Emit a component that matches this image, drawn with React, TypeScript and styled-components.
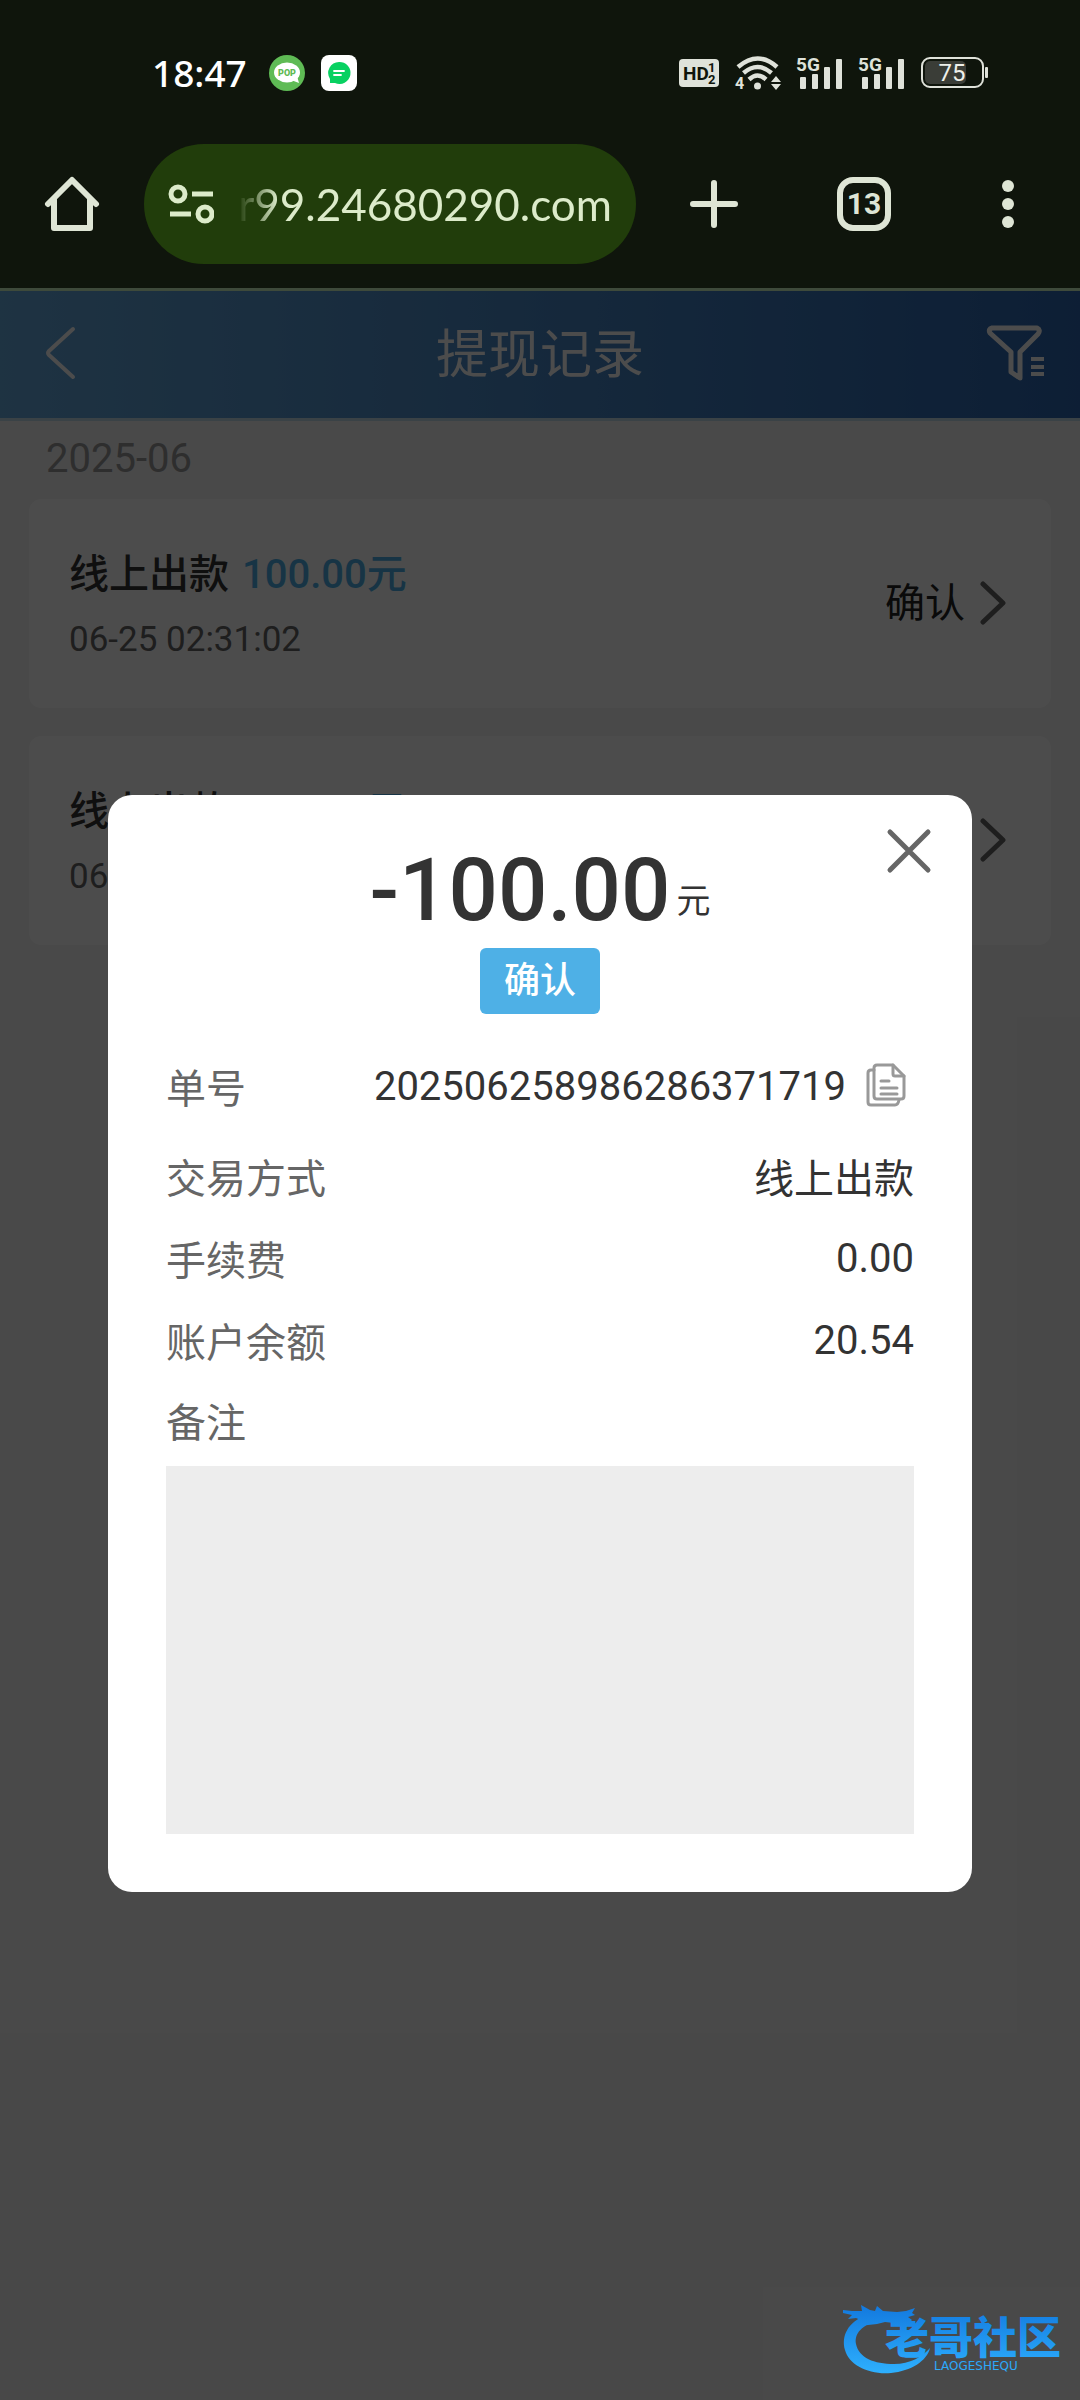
import React, { useState } from 'react';
import styled, { createGlobalStyle } from 'styled-components';

const GlobalStyle = createGlobalStyle`
  *, *::before, *::after { box-sizing: border-box; }
  body {
    margin: 0;
    background: #0f150c;
    font-family: Roboto, "Noto Sans CJK SC", sans-serif;
  }
  button { font: inherit; color: inherit; }
`;

const Screen = styled.div`
  display: flex;
  flex-direction: column;
  min-height: 100vh;
  overflow: hidden;
`;

/* ---------- phone status bar ---------- */

const StatusBar = styled.div`
  display: flex;
  align-items: center;
  justify-content: space-between;
  height: 144px;
  padding: 2px 92px 0 152px;
`;

const StatusGroup = styled.div`
  display: flex;
  align-items: center;
  gap: 16px;
`;

const Clock = styled.time`
  margin-right: 6px;
  color: #fff;
  font: 500 37px/40px "Noto Sans", sans-serif;
`;

/* ---------- browser toolbar ---------- */

const Toolbar = styled.header`
  display: flex;
  align-items: center;
  padding-bottom: 24px;
  border-bottom: 3px solid #3e4a3b;
  color: #dee5d5;
`;

const ToolButton = styled.button<{ $width?: number }>`
  display: flex;
  align-items: center;
  justify-content: center;
  flex: none;
  width: ${(p) => p.$width ?? 144}px;
  height: 120px;
  padding: 0;
  border: 0;
  background: none;
`;

const AddressPill = styled.div`
  display: flex;
  flex: 1;
  align-items: center;
  gap: 24px;
  min-width: 0;
  height: 120px;
  padding: 0 24px;
  border-radius: 60px;
  background: #213d0b;
  color: #dcebca;
`;

const SiteButton = styled.button`
  display: flex;
  flex: none;
  padding: 0;
  border: 0;
  background: none;
`;

const AddressInput = styled.input`
  flex: 1;
  min-width: 0;
  padding: 0;
  border: 0;
  outline: 0;
  background: none;
  color: inherit;
  font: 400 44px/56px Lato, sans-serif;
  text-align: right;
  mask-image: linear-gradient(to right, transparent 0, #000 40px);
`;

const TabCount = styled.span`
  display: flex;
  align-items: center;
  justify-content: center;
  width: 54px;
  height: 54px;
  border: 6px solid currentColor;
  border-radius: 16px;
  font-size: 30px;
  font-weight: 700;
  line-height: 40px;
`;

/* ---------- page ---------- */

const Page = styled.main`
  position: relative;
  flex: 1;
  background: #f3f3f3;
`;

const TitleBar = styled.div`
  display: grid;
  grid-template-columns: 160px 1fr 160px;
  align-items: center;
  height: 130px;
  border-bottom: 3px solid #c2dcec;
  background: linear-gradient(90deg, #66aade, #2c67b2);
  background-clip: padding-box;
  color: #fff;
`;

const Title = styled.h1`
  margin: 0;
  padding-top: 2px;
  font-size: 52px;
  font-weight: 400;
  line-height: 72px;
  text-align: center;
`;

const BarButton = styled.button<{ $end?: boolean }>`
  display: flex;
  justify-content: ${(p) => (p.$end ? 'flex-end' : 'flex-start')};
  padding: ${(p) => (p.$end ? '0 34px 4px 0' : '0 0 4px 44px')};
  border: 0;
  background: none;
`;

const Month = styled.h2`
  margin: 0 0 2px;
  padding: 0 46px;
  color: #999;
  font-size: 40px;
  font-weight: 400;
  line-height: 76px;
`;

const RecordList = styled.ul`
  display: flex;
  flex-direction: column;
  gap: 28px;
  margin: 0;
  padding: 0 29px;
  list-style: none;
`;

const RecordCard = styled.button`
  display: flex;
  align-items: center;
  justify-content: space-between;
  width: 100%;
  height: 209px;
  padding: 0 44px 0 40px;
  border: 0;
  border-radius: 12px;
  background: #fff;
  text-align: left;
`;

const RecordInfo = styled.span`
  display: flex;
  flex-direction: column;
  gap: 10px;
  padding-top: 4px;
`;

const RecordTitle = styled.span`
  display: flex;
  gap: 13px;
  color: #333;
  font-size: 40px;
  font-weight: 500;
  line-height: 58px;
`;

const RecordAmount = styled.span`
  color: #4eb0e6;
`;

const RecordTime = styled.span`
  color: #666;
  font-size: 35px;
  line-height: 52px;
`;

const RecordState = styled.span`
  display: flex;
  align-items: center;
  gap: 14px;
  color: #222;
  font-size: 40px;
  line-height: 58px;
`;

/* ---------- detail dialog ---------- */

const Scrim = styled.div`
  position: absolute;
  inset: 0;
  display: flex;
  align-items: center;
  justify-content: center;
  padding-bottom: 4px;
  background: rgba(0, 0, 0, 0.7);
`;

const Dialog = styled.section`
  position: relative;
  display: flex;
  flex-direction: column;
  width: 80%;
  padding: 45px 58px 58px;
  border-radius: 24px;
  background: #fff;
  color: #333;
`;

const CloseButton = styled.button`
  position: absolute;
  top: 33px;
  right: 40px;
  display: flex;
  padding: 0;
  border: 0;
  background: none;
`;

const Amount = styled.p`
  display: flex;
  align-items: flex-end;
  justify-content: center;
  gap: 6px;
  margin: 0;
  font-size: 87px;
  font-weight: 500;
  line-height: 100px;
`;

const Unit = styled.span`
  font-size: 34px;
  font-weight: 400;
  line-height: 78px;
`;

const StateTag = styled.span`
  align-self: center;
  margin: 8px 0 23px;
  padding: 0 24px;
  border-radius: 6px;
  background: #4eb0e6;
  color: #fff;
  font-size: 36px;
  font-weight: 500;
  line-height: 66px;
`;

const Details = styled.dl`
  margin: 0;
  font-size: 40px;
`;

const DetailRow = styled.div<{ $tall?: boolean }>`
  display: flex;
  align-items: center;
  justify-content: space-between;
  height: ${(p) => (p.$tall ? 98 : 82)}px;
`;

const DetailLabel = styled.dt`
  color: #666;
`;

const DetailValue = styled.dd`
  display: flex;
  align-items: center;
  gap: 20px;
  margin: 0;
`;

const CopyButton = styled.button`
  display: flex;
  padding: 0 8px 0 0;
  border: 0;
  background: none;
`;

const NoteLabel = styled.label`
  color: #666;
  font-size: 40px;
  line-height: 85px;
`;

const Note = styled.textarea`
  display: block;
  width: 100%;
  height: 368px;
  padding: 20px;
  border: 0;
  outline: 0;
  resize: none;
  background: #ededed;
  color: #333;
  font: inherit;
  font-size: 36px;
`;

const Watermark = styled.div`
  position: absolute;
  right: 16px;
  bottom: 24px;
  display: flex;
`;

/* ---------- drawings ---------- */

const PopIcon = () => (
  <svg width="36" height="36" viewBox="0 0 36 36">
    <circle cx="18" cy="18" r="18" fill="#5fbb55" />
    <ellipse cx="18" cy="17.500" rx="13" ry="10" fill="#fff" />
    <path d="M22 25l8 3-2-7z" fill="#fff" />
    <text x="18" y="21" textAnchor="middle" fontFamily="Roboto" fontWeight="900" fontSize="9" fill="#5fbb55">POP</text>
  </svg>
);

const ChatIcon = () => (
  <svg width="36" height="36" viewBox="0 0 36 36">
    <rect width="36" height="36" rx="8" fill="#fff" />
    <path d="M18 7a11 11 0 1 1-4 21l-5 0 0-4A11 11 0 0 1 18 7z" fill="#08d161" />
    <path d="M13 16h10M13 20h7" stroke="#fff" strokeWidth="1.800" strokeLinecap="round" />
  </svg>
);

const HdIcon = () => (
  <svg width="40" height="28" viewBox="0 0 40 28">
    <rect width="40" height="28" rx="4" fill="#dfe2da" />
    <g fill="#0f150c" fontFamily="Roboto" fontWeight="700">
      <text x="4" y="21" fontSize="19">HD</text>
      <text x="29" y="13" fontSize="13">1</text>
      <text x="29" y="25" fontSize="13">2</text>
    </g>
  </svg>
);

const WifiIcon = () => (
  <svg width="46" height="36" viewBox="0 0 46 36" overflow="visible">
    <g fill="none" stroke="#dfe2da" strokeWidth="4.500">
      <path d="M3 12q20-17 39 0" />
      <path d="M8.500 18q14-12 28 0" />
      <path d="M14 24.500q8.500-8 17 0" />
    </g>
    <g fill="#dfe2da">
      <circle cx="22.500" cy="31" r="3.500" />
      <path d="M36 27l5-6 5 6zM36 29l5 6 5-6z" />
      <text x="0" y="34" fontFamily="Roboto" fontWeight="700" fontSize="16">4</text>
    </g>
  </svg>
);

const SignalIcon = () => (
  <svg width="46" height="34" viewBox="0 0 46 34" overflow="visible">
    <g fill="#dfe2da">
      <rect x="3" y="21" width="6" height="12" rx="1" />
      <rect x="15" y="18" width="6" height="15" rx="1" />
      <rect x="27" y="11" width="6" height="22" rx="1" />
      <rect x="39" y="3" width="6" height="30" rx="1" />
      <text x="-1" y="15" fontFamily="Roboto" fontWeight="700" fontSize="19">5G</text>
    </g>
  </svg>
);

const BatteryIcon = () => (
  <svg width="67" height="32" viewBox="0 0 67 32">
    <rect x="1" y="1" width="61" height="29" rx="8" fill="none" stroke="#dfe2da" strokeWidth="2" />
    <rect x="4" y="4" width="41" height="23" rx="5" fill="#3a3d37" />
    <rect x="64" y="10" width="3" height="11" rx="1" fill="#dfe2da" />
    <text x="31" y="24" textAnchor="middle" fontFamily="Roboto" fontSize="24" fill="#eef0ea">75</text>
  </svg>
);

const HomeIcon = () => (
  <svg width="56" height="56" viewBox="0 0 56 56" fill="none" stroke="currentColor" strokeWidth="6" strokeLinecap="round" strokeLinejoin="round">
    <path d="M4 28L28 4l24 24" />
    <path d="M10 24v28h36V24" />
  </svg>
);

const TuneIcon = () => (
  <svg width="46" height="40" viewBox="0 0 46 40" fill="none" stroke="currentColor" strokeWidth="5">
    <circle cx="10" cy="10" r="7" />
    <path d="M24 10h21M2 30h21" />
    <circle cx="37" cy="30" r="7" />
  </svg>
);

const PlusIcon = () => (
  <svg width="48" height="48" viewBox="0 0 48 48" stroke="currentColor" strokeWidth="6" strokeLinecap="round">
    <path d="M24 3v42M3 24h42" />
  </svg>
);

const MoreIcon = () => (
  <svg width="12" height="48" viewBox="0 0 12 48" fill="currentColor">
    <circle cx="6" cy="6" r="6" />
    <circle cx="6" cy="24" r="6" />
    <circle cx="6" cy="42" r="6" />
  </svg>
);

const BackIcon = () => (
  <svg width="32" height="54" viewBox="0 0 32 54" fill="none" stroke="currentColor" strokeWidth="4" strokeLinecap="round" strokeLinejoin="round">
    <path d="M29 3L5 25q-2 2 0 4l24 22" />
  </svg>
);

const FilterIcon = () => (
  <svg width="60" height="56" viewBox="0 0 60 56" fill="none" stroke="currentColor" strokeWidth="5" strokeLinejoin="round">
    <path d="M6 3h45q4 2 1 6L34 27v26l-9-6V27L4 8q-2-4 2-5z" />
    <path d="M45 34h13M45 42h13M45 49h13" strokeWidth="4" />
  </svg>
);

const ForwardIcon = () => (
  <svg width="28" height="46" viewBox="0 0 28 46" fill="none" stroke="#666" strokeWidth="5" strokeLinecap="round" strokeLinejoin="round">
    <path d="M4 3l20 19L4 41" />
  </svg>
);

const CloseIcon = () => (
  <svg width="46" height="46" viewBox="0 0 46 46" stroke="#666" strokeWidth="5" strokeLinecap="round">
    <path d="M4 4l38 38M42 4L4 42" />
  </svg>
);

const CopyIcon = () => (
  <svg width="40" height="46" viewBox="0 0 40 46" fill="none" stroke="#999" strokeWidth="3" strokeLinejoin="round" strokeLinecap="round">
    <path d="M11 2h16l11 11v20q0 3-3 3H11q-3 0-3-3V5q0-3 3-3z" />
    <path d="M27 2v9q0 2 2 2h9" />
    <path d="M8 7H5Q2 7 2 10v29q0 3 3 3h24q3 0 4-5" />
    <path d="M15 18h8M15 25h16M15 31h16" />
  </svg>
);

const DragonLogo = () => (
  <svg width="224" height="72" viewBox="0 0 224 72" overflow="visible" role="img" aria-label="老哥社区">
    <defs>
      <linearGradient id="dragonBlue" x1="0" y1="0" x2="0" y2="72" gradientUnits="userSpaceOnUse">
        <stop offset="0" stopColor="#1278de" />
        <stop offset="1" stopColor="#2fb2ff" />
      </linearGradient>
    </defs>
    <g fill="url(#dragonBlue)">
      <path d="M26 11C8 18 1 32 5 46c4 15 24 25 46 23 20-2 36-12 39-25-8 9-20 16-36 16-20 0-35-6-38-20-2-11 7-19 20-23z" />
      <path d="M3 6l9 1 10 0-1-6 9 5 5 1 2-5 6 5 14 1 9-1 9-3-3 5 3 2-7 2 4 3-3 3-9-1-6 1-9-1-8 2-9 1-8 1 3-5-7-3-8 1 4-4-9-2z" />
      <text x="45" y="50" fontFamily="Noto Sans CJK SC" fontWeight="900" fontSize="44">老哥社区</text>
      <text x="94" y="66" fontFamily="DejaVu Sans" fontSize="12">LAOGESHEQU</text>
    </g>
  </svg>
);

/* ---------- data ---------- */

const records = [
  { id: 1, name: '线上出款', amount: '100.00元', time: '06-25 02:31:02', state: '确认' },
  { id: 2, name: '线上出款', amount: '100.00元', time: '06-25 02:30:41', state: '确认' },
];

const details = [
  { label: '交易方式', value: '线上出款' },
  { label: '手续费', value: '0.00' },
  { label: '账户余额', value: '20.54' },
];

export default function App() {
  const [open, setOpen] = useState(true);

  return (
    <Screen>
      <GlobalStyle />
      <StatusBar>
        <StatusGroup>
          <Clock>18:47</Clock>
          <PopIcon />
          <ChatIcon />
        </StatusGroup>
        <StatusGroup>
          <HdIcon />
          <WifiIcon />
          <SignalIcon />
          <SignalIcon />
          <BatteryIcon />
        </StatusGroup>
      </StatusBar>

      <Toolbar>
        <ToolButton aria-label="主页"><HomeIcon /></ToolButton>
        <AddressPill>
          <SiteButton aria-label="网站信息"><TuneIcon /></SiteButton>
          <AddressInput aria-label="网址" defaultValue="r99.24680290.com" />
        </AddressPill>
        <ToolButton $width={156} aria-label="新标签页"><PlusIcon /></ToolButton>
        <ToolButton aria-label="标签页"><TabCount>13</TabCount></ToolButton>
        <ToolButton aria-label="更多"><MoreIcon /></ToolButton>
      </Toolbar>

      <Page>
        <TitleBar>
          <BarButton aria-label="返回"><BackIcon /></BarButton>
          <Title>提现记录</Title>
          <BarButton $end aria-label="筛选"><FilterIcon /></BarButton>
        </TitleBar>
        <Month>2025-06</Month>
        <RecordList>
          {records.map((r) => (
            <li key={r.id}>
              <RecordCard onClick={() => setOpen(true)}>
                <RecordInfo>
                  <RecordTitle>
                    {r.name}
                    <RecordAmount>{r.amount}</RecordAmount>
                  </RecordTitle>
                  <RecordTime>{r.time}</RecordTime>
                </RecordInfo>
                <RecordState>
                  {r.state}
                  <ForwardIcon />
                </RecordState>
              </RecordCard>
            </li>
          ))}
        </RecordList>

        {open && (
          <Scrim>
            <Dialog role="dialog" aria-modal="true" aria-label="提现详情">
              <CloseButton aria-label="关闭" onClick={() => setOpen(false)}><CloseIcon /></CloseButton>
              <Amount>
                -100.00
                <Unit>元</Unit>
              </Amount>
              <StateTag>确认</StateTag>
              <Details>
                <DetailRow $tall>
                  <DetailLabel>单号</DetailLabel>
                  <DetailValue>
                    202506258986286371719
                    <CopyButton aria-label="复制单号"><CopyIcon /></CopyButton>
                  </DetailValue>
                </DetailRow>
                {details.map((d) => (
                  <DetailRow key={d.label}>
                    <DetailLabel>{d.label}</DetailLabel>
                    <DetailValue>{d.value}</DetailValue>
                  </DetailRow>
                ))}
              </Details>
              <NoteLabel htmlFor="note">备注</NoteLabel>
              <Note id="note" readOnly />
            </Dialog>
          </Scrim>
        )}
        <Watermark><DragonLogo /></Watermark>
      </Page>
    </Screen>
  );
}
